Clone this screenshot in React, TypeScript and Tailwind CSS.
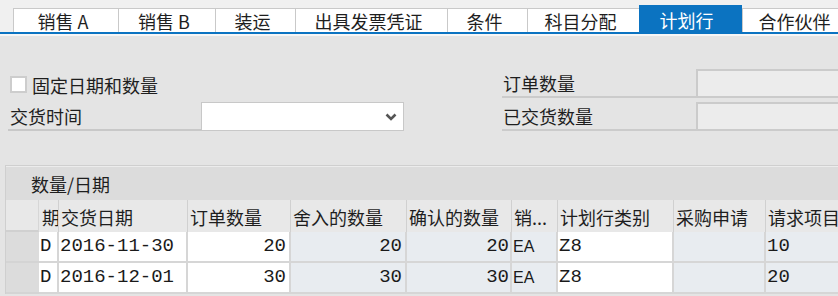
import React from "react";

const cjk = "font-['Noto_Sans_CJK_SC','Noto_Sans',sans-serif]";
const mono = "font-['Liberation_Mono','Noto_Sans_CJK_SC',monospace]";
const sans = "font-['Liberation_Sans',Arial,sans-serif]";

type Tab = { label: string; w: string; active?: boolean };
const tabs: Tab[] = [
  { label: "销售 A", w: "w-[105px]" },
  { label: "销售 B", w: "w-[97px]" },
  { label: "装运", w: "w-[80px]" },
  { label: "出具发票凭证", w: "w-[152px]" },
  { label: "条件", w: "w-[80px]" },
  { label: "科目分配", w: "w-[112px]" },
  { label: "计划行", w: "w-[103px]", active: true },
  { label: "合作伙伴", w: "w-[110px]" },
];

type Col = {
  head: string;
  w: string;
  bg: string;
  cells: string[];
  right?: boolean;
  font: string;
  pad: string;
  hpad: string;
};

const cols: Col[] = [
  { head: "期", w: "w-[20px]", bg: "bg-white", cells: ["D", "D"], font: mono, pad: "pl-[1px]", hpad: "pl-[3px]" },
  { head: "交货日期", w: "w-[129px]", bg: "bg-white", cells: ["2016-11-30", "2016-12-01"], font: mono, pad: "pl-[1px]", hpad: "pl-[2px]" },
  { head: "订单数量", w: "w-[103px]", bg: "bg-white", cells: ["20", "30"], right: true, font: mono, pad: "pr-[3px]", hpad: "pl-[2px]" },
  { head: "舍入的数量", w: "w-[116px]", bg: "bg-[#e8ecf0]", cells: ["20", "30"], right: true, font: mono, pad: "pr-[3px]", hpad: "pl-[2px]" },
  { head: "确认的数量", w: "w-[105px]", bg: "bg-[#e8ecf0]", cells: ["20", "30"], right: true, font: mono, pad: "pr-[1px]", hpad: "pl-[2px]" },
  { head: "销...", w: "w-[46px]", bg: "bg-[#e8ecf0]", cells: ["EA", "EA"], font: sans, pad: "pl-[1px]", hpad: "pl-[2px]" },
  { head: "计划行类别", w: "w-[116px]", bg: "bg-white", cells: ["Z8", "Z8"], font: mono, pad: "pl-[1px]", hpad: "pl-[2px]" },
  { head: "采购申请", w: "w-[92px]", bg: "bg-[#e8ecf0]", cells: ["", ""], font: mono, pad: "pl-[1px]", hpad: "pl-[2px]" },
  { head: "请求项目", w: "w-[90px]", bg: "bg-[#e8ecf0]", cells: ["10", "20"], font: mono, pad: "pl-[1px]", hpad: "pl-[2px]" },
];

export default function App() {
  return (
    <div className={`w-[838px] h-[296px] overflow-hidden bg-[#e4e4e4] text-[#1e1e1e] ${cjk}`}>
      {/* Tab strip */}
      <div className="bg-[#f0f0f0]">
        <div className="flex items-end h-[32px] pl-[13px] whitespace-nowrap">
          {tabs.map((t) =>
            t.active ? (
              <div
                key={t.label}
                className={`${t.w} shrink-0 h-[27px] bg-[#0b73c1] text-white text-[18px] leading-none flex items-center justify-center pt-[3px] pr-[8px]`}
              >
                {t.label}
              </div>
            ) : (
              <div
                key={t.label}
                className={`${t.w} shrink-0 h-[24px] bg-white border-t border-l border-[#c9c9c9] text-[18px] leading-none flex items-center justify-center pr-[6px]`}
              >
                {t.label}
              </div>
            )
          )}
        </div>
        <div className="h-[2px] bg-[#0b73c1]" />
        <div className="h-[2px] bg-[#f6f6f6]" />
      </div>

      {/* Form */}
      <div className="flex pl-[8px] mt-[33px] text-[18px] leading-none">
        <div className="w-[396px] flex flex-col gap-[4px]">
          <div className="h-[29px] flex items-center pt-[2px] pl-[2px]">
            <div className="w-[17px] h-[17px] bg-white border-2 border-[#cdcdcd]" />
            <span className="ml-[5px]">固定日期和数量</span>
          </div>
          <div className="h-[29px] flex">
            <div className="w-[193px] border-b-2 border-[#c8c8c8] flex items-center pl-[2px] pt-[1px]">
              交货时间
            </div>
            <div className="flex-1 bg-white border border-[#c8c8c8] flex items-center justify-end pr-[6px]">
              <svg width="12" height="8" viewBox="0 0 12 8">
                <path d="M1.5 1.5 L6 6 L10.5 1.5" fill="none" stroke="#555" strokeWidth="2.6" />
              </svg>
            </div>
          </div>
        </div>
        <div className="ml-[98px] flex-1 flex flex-col gap-[4px]">
          <div className="h-[29px] flex">
            <div className="w-[194px] border-b-2 border-[#cbcbcb] flex items-center pl-[1px] pt-[1px]">
              订单数量
            </div>
            <div className="flex-1 bg-[#ececec] border-t-2 border-l-2 border-b-2 border-[#cbcbcb]" />
          </div>
          <div className="h-[29px] flex">
            <div className="w-[194px] border-b-2 border-[#cbcbcb] flex items-center pl-[1px] pt-[1px]">
              已交货数量
            </div>
            <div className="flex-1 bg-[#ececec] border-t-2 border-l-2 border-b-2 border-[#cbcbcb]" />
          </div>
        </div>
      </div>

      {/* Table */}
      <div className="ml-[5px] mt-[34px] border-l border-t border-[#cfcfcf]">
        <div className="h-[34px] bg-[#dcdcdc] border-t border-[#ececec] flex items-center pl-[25px] text-[18px] leading-none">
          数量/日期
        </div>
        <div className="flex whitespace-nowrap">
          <div className="w-[33px] shrink-0 flex flex-col">
            <div className="h-[32px] bg-[#e8e8e8] border-b-2 border-[#d0d0d0] border-r border-r-[#d6d6d6]" />
            <div className="h-[31px] bg-[#dcdcdc] border-b-2 border-[#d4d4d4]" />
            <div className="h-[31px] bg-[#dcdcdc] border-b-2 border-[#d4d4d4]" />
          </div>
          {cols.map((c) => (
            <div key={c.head} className={`${c.w} shrink-0 flex flex-col`}>
              <div className={`h-[32px] bg-[#e8e8e8] border-r border-[#d0d0d0] flex items-center ${c.hpad} pt-[1px] overflow-hidden text-[18px] leading-none`}>
                {c.head}
              </div>
              {c.cells.map((v, i) => (
                <div
                  key={i}
                  className={`h-[31px] ${c.bg} border-r-2 border-b-2 border-[#d6d6d6] flex items-center overflow-hidden ${
                    c.right ? "justify-end" : "justify-start"
                  } ${c.pad} ${c.font} ${c.font === sans ? "text-[16px]" : "text-[19px]"} leading-none text-[#1a1a1a]`}
                >
                  {v}
                </div>
              ))}
            </div>
          ))}
        </div>
      </div>
    </div>
  );
}
